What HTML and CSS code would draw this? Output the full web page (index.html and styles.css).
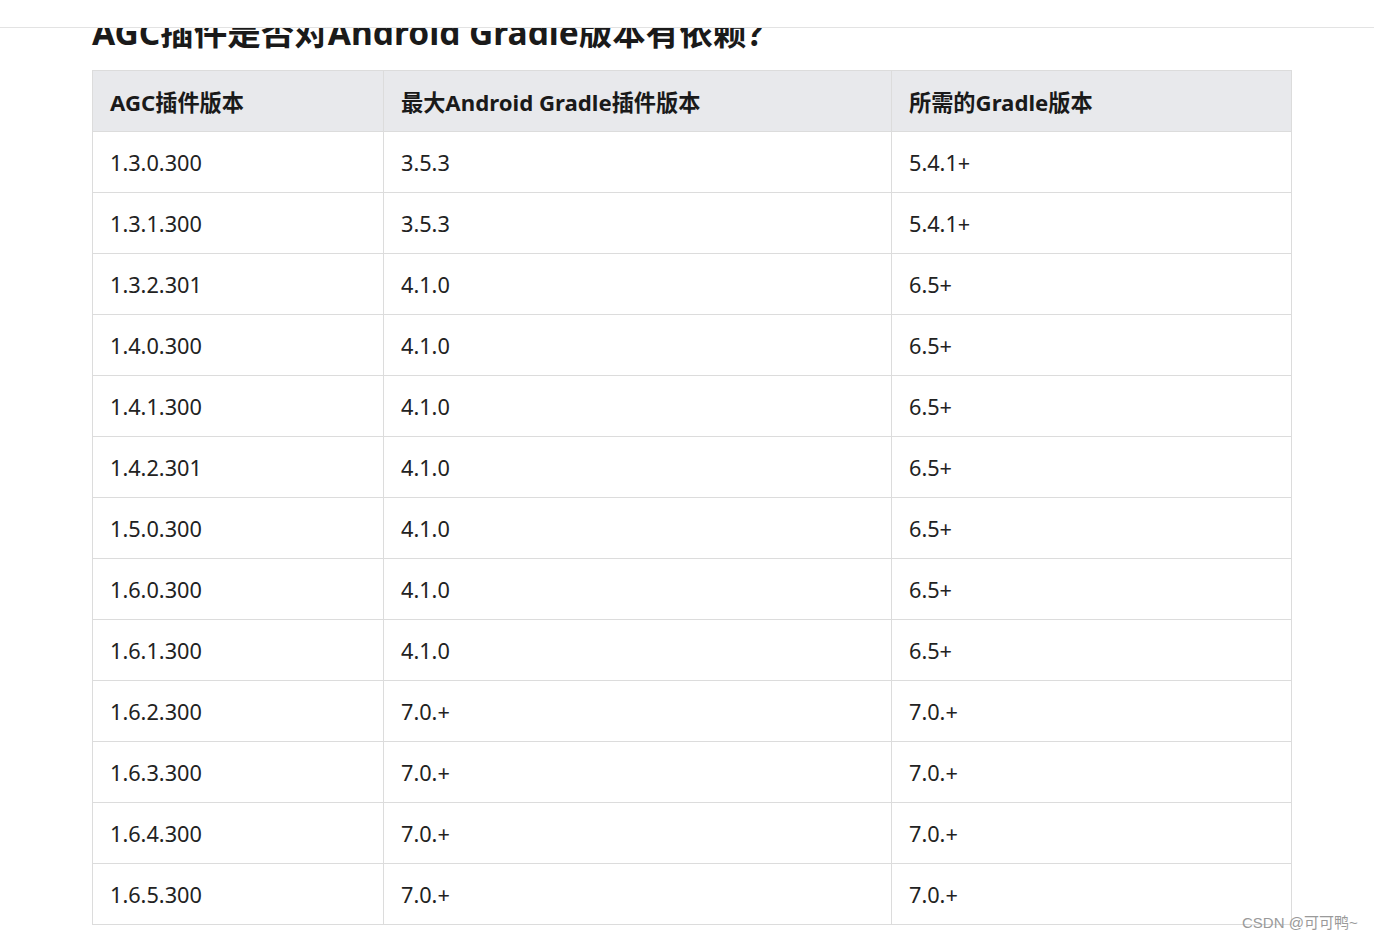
FILE: index.html
```html
<!DOCTYPE html>
<html lang="zh">
<head>
<meta charset="utf-8">
<link rel="stylesheet" href="styles.css">
</head>
<body>
<div class="topbar"></div>
<main class="content">
  <h2 class="title">AGC插件是否对Android Gradle版本有依赖？</h2>
  <table class="ver">
    <thead>
      <tr><th class="c1">AGC插件版本</th><th class="c2">最大Android Gradle插件版本</th><th class="c3">所需的Gradle版本</th></tr>
    </thead>
    <tbody>
      <tr><td>1.3.0.300</td><td>3.5.3</td><td>5.4.1+</td></tr>
      <tr><td>1.3.1.300</td><td>3.5.3</td><td>5.4.1+</td></tr>
      <tr><td>1.3.2.301</td><td>4.1.0</td><td>6.5+</td></tr>
      <tr><td>1.4.0.300</td><td>4.1.0</td><td>6.5+</td></tr>
      <tr><td>1.4.1.300</td><td>4.1.0</td><td>6.5+</td></tr>
      <tr><td>1.4.2.301</td><td>4.1.0</td><td>6.5+</td></tr>
      <tr><td>1.5.0.300</td><td>4.1.0</td><td>6.5+</td></tr>
      <tr><td>1.6.0.300</td><td>4.1.0</td><td>6.5+</td></tr>
      <tr><td>1.6.1.300</td><td>4.1.0</td><td>6.5+</td></tr>
      <tr><td>1.6.2.300</td><td>7.0.+</td><td>7.0.+</td></tr>
      <tr><td>1.6.3.300</td><td>7.0.+</td><td>7.0.+</td></tr>
      <tr><td>1.6.4.300</td><td>7.0.+</td><td>7.0.+</td></tr>
      <tr><td>1.6.5.300</td><td>7.0.+</td><td>7.0.+</td></tr>
    </tbody>
  </table>
</main>
<div class="watermark">CSDN @可可鸭~</div>
</body>
</html>
```
FILE: styles.css
```css
html, body {
  margin: 0;
  padding: 0;
  background: #fff;
  width: 1374px;
  height: 941px;
  overflow: hidden;
  font-family: "Noto Sans", "Noto Sans CJK SC", sans-serif;
  color: #1f1f1f;
}
.topbar {
  position: fixed;
  top: 0;
  left: 0;
  right: 0;
  height: 27px;
  background: #fff;
  border-bottom: 1px solid #e3e3e3;
  z-index: 2;
}
.content {
  padding: 0 0 0 92px;
}
.title {
  margin: 0;
  padding-top: 10px;
  font-size: 33.5px;
  line-height: 44px;
  font-weight: 700;
  color: #1a1a1a;
}
.ver {
  margin-top: 16px;
  border-collapse: collapse;
  width: 1199px;
  table-layout: fixed;
}
.ver th, .ver td {
  border: 1px solid #dcdcdc;
  height: 61px;
  padding: 0 0 0 17px;
  text-align: left;
  font-size: 21.7px;
  box-sizing: border-box;
}
.ver th {
  background: #e8e9ec;
  font-weight: 700;
  font-size: 22.2px;
  color: #1a1a1a;
}
.ver td {
  color: #222;
}
.c1 { width: 291px; }
.c2 { width: 508px; }
.c3 { width: 400px; }
.watermark {
  position: absolute;
  left: 1242px;
  top: 911px;
  font-family: "Liberation Sans", "Noto Sans CJK SC", sans-serif;
  font-size: 15px;
  color: #9a9a9a;
}
```
